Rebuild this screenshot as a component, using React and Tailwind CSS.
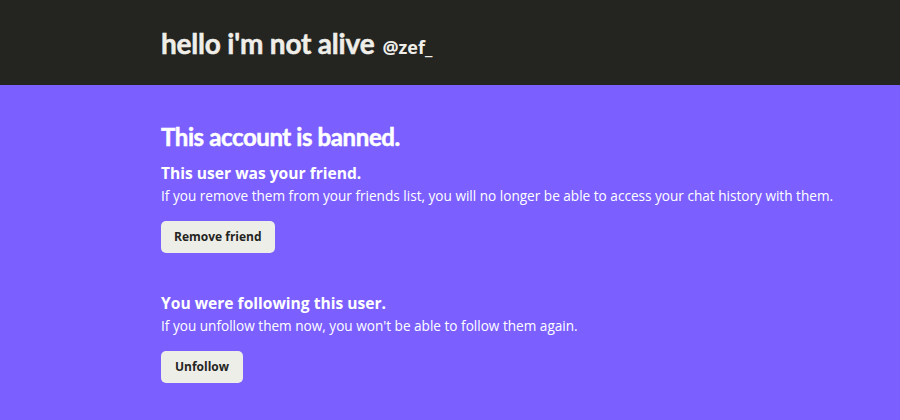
export default function App() {
  return (
    <div className="w-[900px] h-[420px] overflow-hidden bg-[#7b5fff] text-white" style={{ fontFamily: '"Open Sans", "Noto Sans", sans-serif' }}>
      <div className="h-[85px] bg-[#242421] flex items-center pl-[161px]">
        <div className="flex items-baseline gap-[8px] text-[#efeee9]">
          <h1 className="text-[28px] font-bold font-['Lato'] tracking-[-0.2px] [-webkit-text-stroke:0.5px_#efeee9]">hello i'm not alive</h1>
          <span className="text-[18px] font-bold">@zef_</span>
        </div>
      </div>
      <div className="pl-[161px] pt-[36px]">
        <h2 className="text-[24px] font-bold font-['Lato'] leading-[32px] tracking-[-0.4px] [-webkit-text-stroke:0.5px_white]">This account is banned.</h2>
        <div className="mt-[10px] text-[15.6px] font-bold leading-[20px]">This user was your friend.</div>
        <p className="text-[13.6px] leading-[22px] mt-[2px]">If you remove them from your friends list, you will no longer be able to access your chat history with them.</p>
        <button className="mt-[14px] h-[32px] px-[13px] rounded-[5px] bg-[#eeeee9] text-[#242421] text-[12px] font-bold">Remove friend</button>
        <div className="mt-[40px] text-[15.6px] font-bold leading-[20px]">You were following this user.</div>
        <p className="text-[13.6px] leading-[22px] mt-[2px]">If you unfollow them now, you won't be able to follow them again.</p>
        <button className="mt-[14px] h-[32px] px-[14px] rounded-[5px] bg-[#eeeee9] text-[#242421] text-[12px] font-bold">Unfollow</button>
      </div>
    </div>
  );
}
